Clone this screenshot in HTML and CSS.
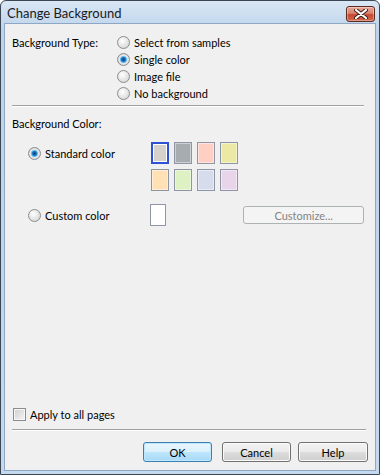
FILE: index.html
```html
<!DOCTYPE html>
<html lang="en">
<head>
    <meta charset="UTF-8">
    <title>Change Background</title>
    <link rel="stylesheet" href="styles.css">
</head>
<body>
    <div class="window">
        <div class="titlebar">
            <span class="title">Change Background</span>
            <button class="close-btn">
                <svg width="14" height="10" viewBox="0 0 14 10">
                    <path d="M2 1 L12 9 M12 1 L2 9" stroke="#3a1e18" stroke-width="4" stroke-linecap="round"/>
                    <path d="M2 1 L12 9 M12 1 L2 9" stroke="#ffffff" stroke-width="2.2" stroke-linecap="round"/>
                </svg>
            </button>
        </div>

        <div class="client">
            <div class="type-section">
                <div class="field-label">Background Type:</div>
                <div class="options">
                    <div class="option"><span class="radio"></span>Select from samples</div>
                    <div class="option"><span class="radio checked"></span>Single color</div>
                    <div class="option"><span class="radio"></span>Image file</div>
                    <div class="option"><span class="radio"></span>No background</div>
                </div>
            </div>

            <div class="divider"></div>

            <div class="section-label">Background Color:</div>

            <div class="color-row">
                <div class="option indent"><span class="radio checked"></span>Standard color</div>
                <div class="swatches">
                    <div class="swatch selected" style="background-color: #d6d2cb;"></div>
                    <div class="swatch" style="background-color: #a7acb0;"></div>
                    <div class="swatch" style="background-color: #ffcfc4;"></div>
                    <div class="swatch" style="background-color: #ebe9a4;"></div>
                    <div class="swatch" style="background-color: #ffe1b5;"></div>
                    <div class="swatch" style="background-color: #ddf1c2;"></div>
                    <div class="swatch" style="background-color: #d6dcec;"></div>
                    <div class="swatch" style="background-color: #e9d5ea;"></div>
                </div>
            </div>

            <div class="custom-row">
                <div class="option indent"><span class="radio"></span>Custom color</div>
                <div class="custom-box"></div>
                <button class="btn customize" disabled>Customize...</button>
            </div>

            <div class="spacer"></div>

            <div class="option apply"><span class="checkbox"></span>Apply to all pages</div>

            <div class="divider bottom"></div>

            <div class="buttons">
                <button class="btn default">OK</button>
                <button class="btn cancel">Cancel</button>
                <button class="btn help">Help</button>
            </div>
        </div>
    </div>
</body>
</html>
```

FILE: styles.css
```css
body {
    margin: 0;
    padding: 0;
    background-color: #ffffff;
    font-family: Lato, "Liberation Sans", sans-serif;
    font-size: 11px;
    color: #000;
}
.window {
    width: 380px;
    height: 475px;
    box-sizing: border-box;
    border: 1px solid #3c4654;
    border-radius: 6px 6px 0 0;
    background: linear-gradient(to bottom, #d9e7f5, #bdd3ea 30px, #c4d8ee);
    display: flex;
    flex-direction: column;
    padding: 0 3px 3px 3px;
}
.titlebar {
    height: 22px;
    display: flex;
    align-items: center;
    justify-content: space-between;
    flex-shrink: 0;
}
.title {
    font-family: Lato, "Liberation Sans", sans-serif;
    font-size: 13px;
    color: #1a1a1a;
    margin-left: 3px;
    margin-top: 2px;
}
.close-btn {
    width: 29px;
    height: 16px;
    margin-top: 4px;
    margin-right: 1px;
    padding: 0;
    border: 1px solid #5b2b22;
    border-radius: 3px;
    background: linear-gradient(to bottom, #e9a899, #d9826f 45%, #c5482f 55%, #d06a4f);
    box-shadow: inset 0 0 0 1px rgba(255, 255, 255, 0.35);
    display: flex;
    align-items: center;
    justify-content: center;
}
.client {
    flex: 1;
    background-color: #f0f0f0;
    border: 1px solid #8ea7c4;
    padding: 10px 11px 8px 7px;
    display: flex;
    flex-direction: column;
}
.type-section {
    display: flex;
}
.field-label {
    width: 105px;
    height: 17px;
    line-height: 17px;
}
.option {
    height: 17px;
    display: flex;
    align-items: center;
    white-space: nowrap;
}
.radio {
    width: 11px;
    height: 11px;
    border: 1px solid #8a8c8e;
    border-radius: 50%;
    margin-right: 4px;
    background: radial-gradient(circle at 40% 35%, #ffffff, #e6e6e6 50%, #cfd0d1);
    flex-shrink: 0;
}
.radio.checked {
    background: radial-gradient(circle, #0d3f78 0, #1a74c0 2px, #5cb6ef 3px, #e9e9e9 4px, #d5d5d5 6px);
}
.checkbox {
    width: 11px;
    height: 11px;
    border: 1px solid #8a8c8e;
    margin-right: 4px;
    background: linear-gradient(135deg, #cfd0d1, #f4f4f4);
    box-shadow: inset 0 0 0 1px #f7f7f7;
}
.divider {
    height: 0;
    border-top: 1px solid #a0a0a0;
    border-bottom: 1px solid #ffffff;
    margin-top: 3px;
}
.section-label {
    margin-top: 8px;
    height: 17px;
    line-height: 17px;
}
.color-row {
    display: flex;
    margin-top: 10px;
}
.indent {
    margin-left: 16px;
}
.color-row .option {
    width: 123px;
    height: 23px;
}
.swatches {
    display: grid;
    grid-template-columns: repeat(4, 18px);
    grid-auto-rows: 22px;
    column-gap: 5px;
    row-gap: 5px;
}
.swatch {
    box-sizing: border-box;
    border: 1px solid #8e95a5;
    box-shadow: inset 0 0 0 1px rgba(255, 255, 255, 0.45);
}
.swatch.selected {
    border: 2px solid #2e52d6;
    box-shadow: inset 0 0 0 1px #ffffff;
}
.custom-row {
    display: flex;
    align-items: center;
    margin-top: 13px;
}
.custom-row .option {
    width: 124px;
}
.custom-box {
    width: 15px;
    height: 20px;
    border: 1px solid #8e95a5;
    background-color: #fff;
}
.btn {
    font-family: Lato, "Liberation Sans", sans-serif;
    font-size: 11px;
    height: 20px;
    padding: 0;
    border: 1px solid #707070;
    border-radius: 3px;
    background: linear-gradient(to bottom, #f2f2f2, #ebebeb 50%, #dddddd 50%, #cfcfcf);
    box-shadow: inset 0 0 0 1px #fbfbfb;
    color: #000;
}
.customize {
    width: 123px;
    height: 18px;
    margin-left: 77px;
    border-color: #adb2b5;
    background: #f4f4f4;
    box-shadow: none;
    color: #838383;
}
.spacer {
    flex: 1;
}
.apply {
    margin-left: 1px;
}
.divider.bottom {
    margin-top: 6px;
    margin-right: -2px;
}
.buttons {
    display: flex;
    justify-content: flex-end;
    margin-top: 11px;
    margin-right: -4px;
}
.default {
    width: 69px;
    border-color: #3c7fb1;
    background: linear-gradient(to bottom, #eaf6fd, #d9f0fc 50%, #bee6fd 50%, #a7d9f5);
    box-shadow: inset 0 0 0 1px #bde8ff;
}
.cancel {
    width: 69px;
    margin-left: 10px;
}
.help {
    width: 70px;
    margin-left: 7px;
}
```
